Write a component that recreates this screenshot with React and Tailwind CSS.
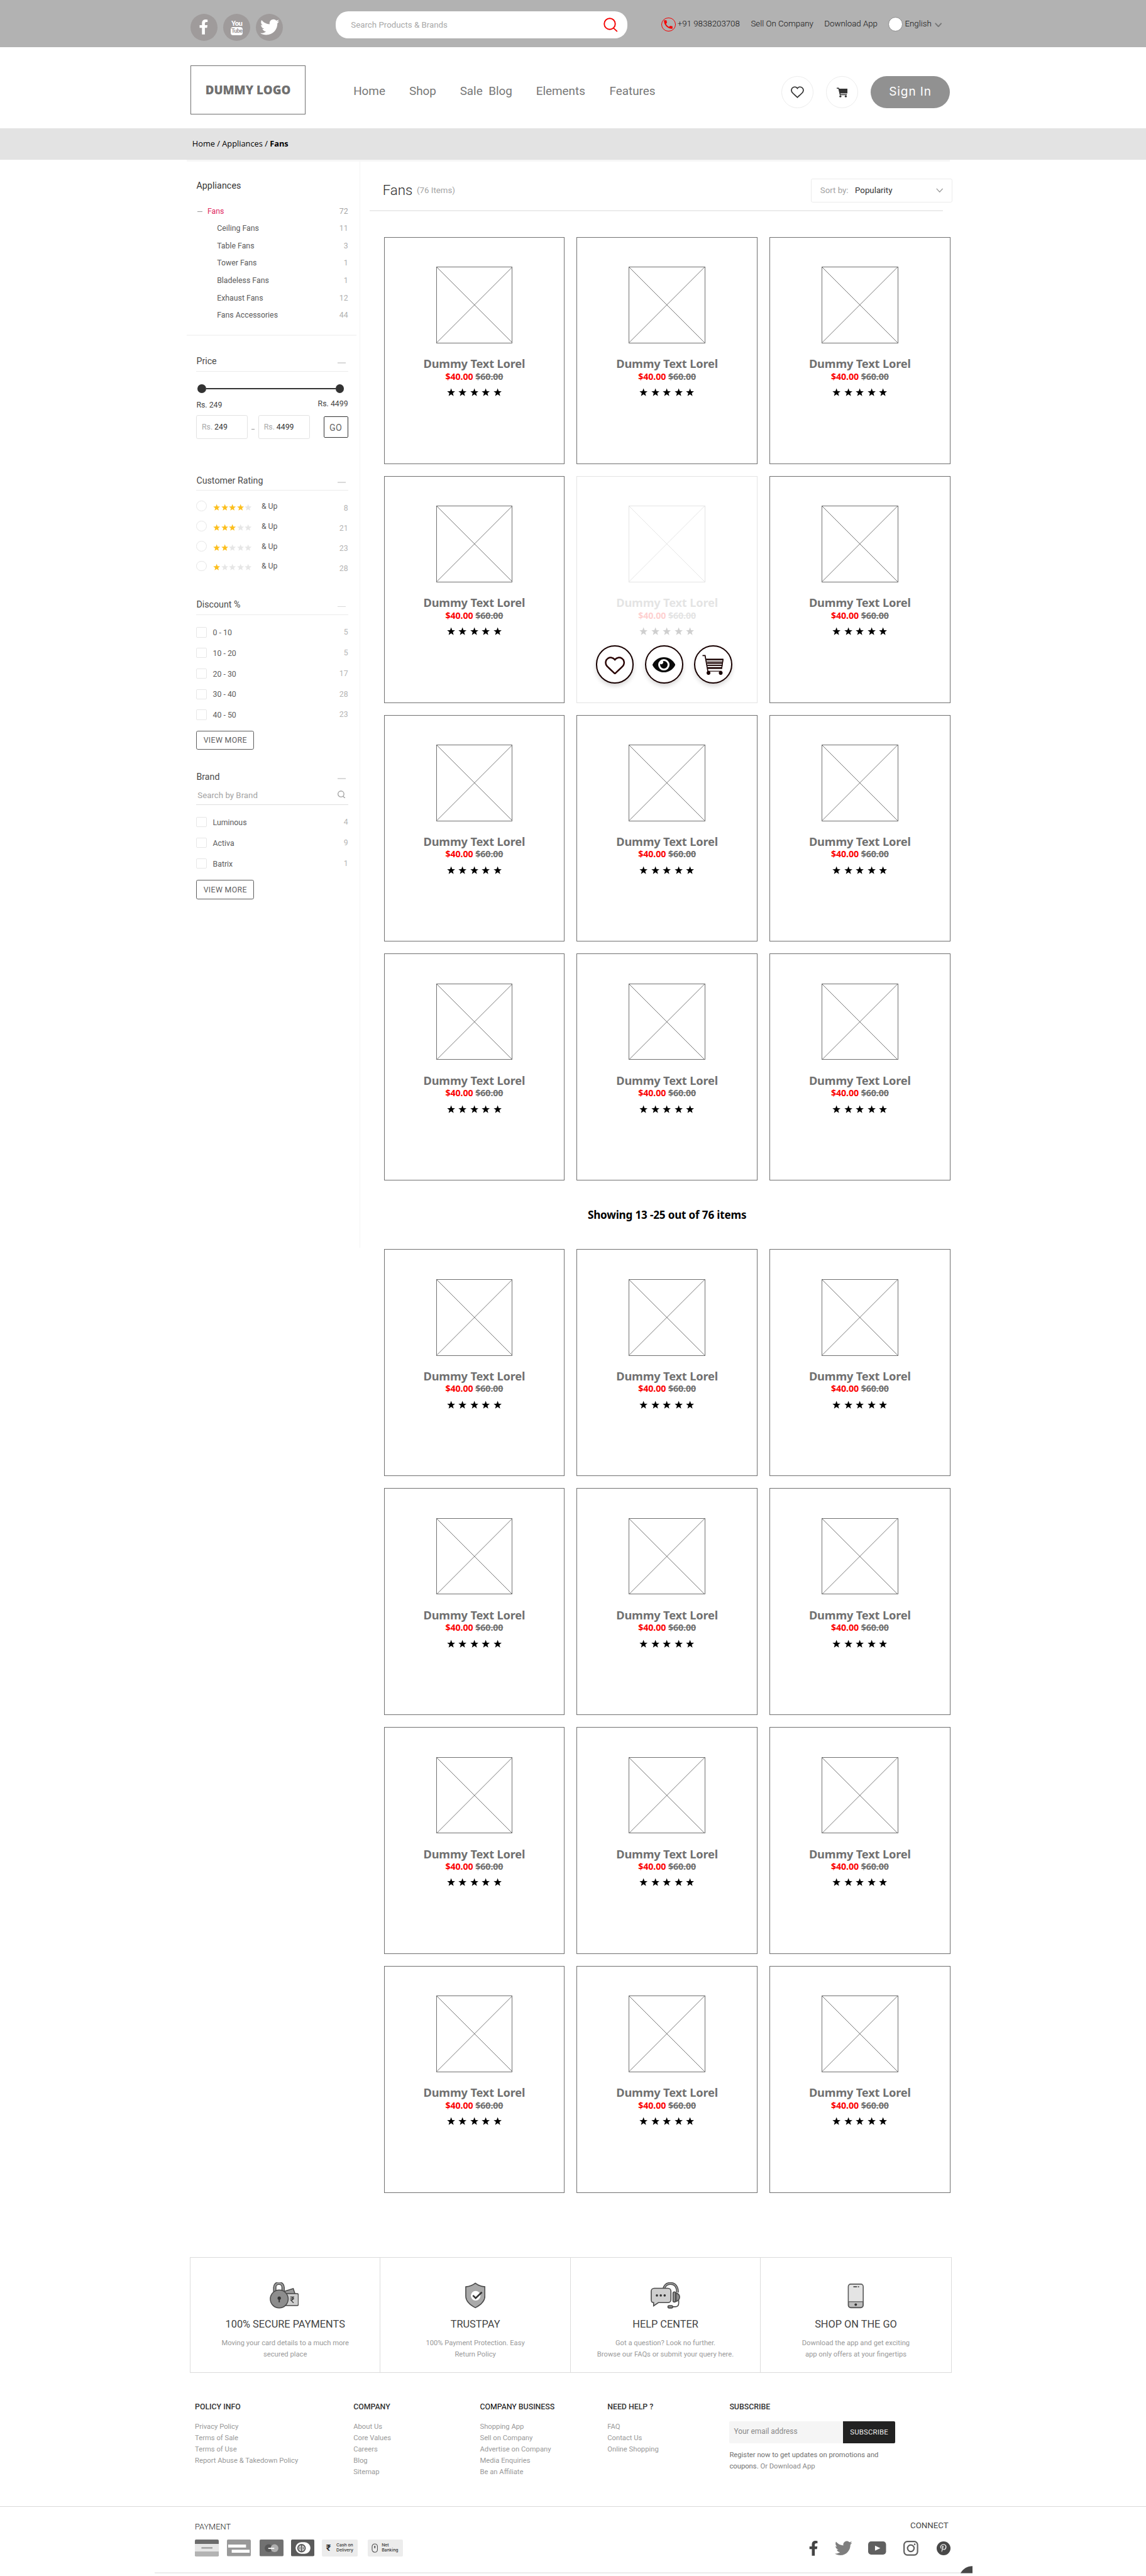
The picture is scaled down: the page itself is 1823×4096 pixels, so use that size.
import React from 'react';
import { FaFacebookF, FaTwitter, FaEye, FaPinterestP } from 'react-icons/fa';
import { MdCall } from 'react-icons/md';

const OPEN = "font-['Open_Sans','Liberation_Sans',sans-serif]";
const NOTO = "font-['Noto_Sans','Liberation_Sans',sans-serif]";
const INTER = "font-['Inter','Liberation_Sans',sans-serif]";

/* ---------- small drawings ---------- */

function Star({ className }) {
  return (
    <svg viewBox="0 0 24 24" className={className} fill="currentColor">
      <path d="M12 0.8l3 8.1 8.6.4-6.700 5.300 2.300 8.300L12 18.200l-7.200 4.700 2.300-8.300L.4 9.300 9 8.900z" />
    </svg>
  );
}

function Chevron({ className, width = 2 }) {
  return (
    <svg viewBox="0 0 12 8" className={className} fill="none" stroke="currentColor" strokeWidth={width}>
      <path d="M0.800 1l5.200 5.600L11.200 1" />
    </svg>
  );
}

function Magnifier({ className, width = 2 }) {
  return (
    <svg viewBox="0 0 24 24" className={className} fill="none" stroke="currentColor" strokeWidth={width}>
      <circle cx="10.500" cy="10.500" r="9.200" />
      <path d="M16.500 17.300l6.500 6" />
    </svg>
  );
}

function Heart({ className, width = 2 }) {
  return (
    <svg viewBox="0 0 34 30" className={className} fill="none" stroke="currentColor" strokeWidth={width}>
      <path d="M17 5.200C14 1.200 9 .8 5.400 3 1 6 .6 11.500 3.200 15.300 4.400 17 14 25.800 17 28.600c3-2.800 12.600-11.600 13.800-13.300C33.400 11.500 33 6 28.600 3 25 .8 20 1.200 17 5.200z" />
    </svg>
  );
}

function CartSolid({ className }) {
  return (
    <svg viewBox="0 0 18 17" className={className} fill="currentColor">
      <path d="M0 .6h3.600l.7 1.600H18v6.800c0 .6-.4 1-1 1H6.200l.3 1.400H17V13H5.200L2.700 2.200H0z" />
      <circle cx="6.200" cy="14.900" r="1.700" />
      <circle cx="15.200" cy="14.900" r="1.700" />
    </svg>
  );
}

function CartStriped({ className }) {
  return (
    <svg viewBox="0 0 36 34" className={className}>
      <g fill="none" stroke="#180000">
        <path d="M.5 1.500h4.300l4.800 27" strokeWidth="1.800" />
        <path d="M6.500 8h29" strokeWidth="2.600" />
        <path d="M7.500 11.500h27.500" strokeWidth="1" />
        <path d="M8 14h26.500" strokeWidth="2.400" />
        <path d="M8.500 17.800h25.500" strokeWidth="2" />
        <path d="M9 22.300h24" strokeWidth="3" />
        <path d="M35 7.500l-2.500 16" strokeWidth="1.600" />
        <path d="M9.500 27.600h23" strokeWidth="1.200" />
      </g>
      <circle cx="10.500" cy="30.600" r="3.200" fill="#180000" />
      <circle cx="31" cy="30.600" r="3.200" fill="#180000" />
    </svg>
  );
}

function LockIcon() {
  return (
    <svg viewBox="0 0 49 44" className="-ml-[4px] h-[44px] w-[49px]" stroke="#4a4a4a" strokeWidth="1.600">
      <path d="M25 15l14.500-4.500 3 9H26z" fill="#9b9b9b" />
      <rect x="24" y="19" width="24" height="20" rx="2" fill="#cfcfcf" />
      <path d="M8.500 16V8.500a7 7 0 0 1 14 0V16" fill="none" strokeWidth="5.500" />
      <path d="M8.500 16V8.500a7 7 0 0 1 14 0V16" fill="none" stroke="#9b9b9b" strokeWidth="2.500" />
      <ellipse cx="16" cy="28" rx="15" ry="15" fill="#8d8d8d" />
      <circle cx="16" cy="26.500" r="2.800" fill="#333" stroke="none" />
      <path d="M16 27v6.500" stroke="#333" strokeWidth="2" />
      <path d="M34.500 24.500h6.500M34.500 27.500h6.500M35.500 24.500c5 0 5 5.500 0 5.500l4.500 4.500" fill="none" stroke="#333" strokeWidth="1.300" />
    </svg>
  );
}

function ShieldIcon() {
  return (
    <svg viewBox="0 0 34 44" className="h-[44px] w-[34px]">
      <path d="M17 1.500c5 4 10 5.500 16 6v15.500c0 9-7 15-16 19.500C8 38 1 32 1 23V7.500c6-.5 11-2 16-6z" fill="#a9a9a9" stroke="#4a4a4a" strokeWidth="1.700" />
      <circle cx="17.500" cy="22.500" r="8" fill="#fff" />
      <path d="M13 22l4.500 4.500L28 16.500" fill="none" stroke="#333" strokeWidth="2.800" />
    </svg>
  );
}

function HeadsetIcon() {
  return (
    <svg viewBox="0 0 50 44" className="h-[44px] w-[50px]" stroke="#4a4a4a" strokeWidth="1.700">
      <path d="M22 11C24 4 28 2 33 2c8 0 12 6 12 15" fill="none" strokeWidth="4.500" />
      <path d="M22 11C24 4 28 2 33 2c8 0 12 6 12 15" fill="none" stroke="#b5b5b5" strokeWidth="1.500" />
      <path d="M6 10h23a5 5 0 0 1 5 5v14a5 5 0 0 1-5 5H13l-8 5.500V34c-3 0-4-2-4-5V15a5 5 0 0 1 5-5z" fill="#cfcfcf" />
      <g fill="#333" stroke="none">
        <circle cx="10.500" cy="22" r="1.900" />
        <circle cx="17" cy="22" r="1.900" />
        <circle cx="23.500" cy="22" r="1.900" />
      </g>
      <rect x="37.500" y="16" width="4.500" height="17" rx="2.200" fill="#8d8d8d" />
      <path d="M42.500 18c8 2 8 11 0 14z" fill="#8d8d8d" />
      <path d="M47 30v5c0 4-2 6-6 6h-4" fill="none" />
      <rect x="29" y="39" width="8" height="4" rx="2" fill="#8d8d8d" />
    </svg>
  );
}

function PhoneIcon() {
  return (
    <svg viewBox="0 0 28 44" className="h-[44px] w-[28px]">
      <rect x="1.500" y="3" width="25" height="39.500" rx="4" fill="#e4e4e4" stroke="#5a5a5a" strokeWidth="1.700" />
      <path d="M2 32.500h24v6a3.500 3.500 0 0 1-3.500 3.500h-17A3.500 3.500 0 0 1 2 38.500z" fill="#bdbdbd" stroke="#5a5a5a" strokeWidth="1.400" />
      <circle cx="14" cy="37.500" r="2.100" fill="#333" />
      <path d="M10 7.500h6M17.500 7.500h2" stroke="#4a4a4a" strokeWidth="1.700" />
    </svg>
  );
}

/* ---------- header ---------- */

function SocialCircle({ children }) {
  return <div className="flex size-[45px] items-center justify-center rounded-full bg-[#9f9b9b] text-white">{children}</div>;
}

function TopBar() {
  return (
    <div className="flex h-[79px] bg-[#b2b2b2] pl-[319px]">
      <div className="mt-[23px] flex gap-[10px]">
        <SocialCircle><FaFacebookF className="size-[25px]" /></SocialCircle>
        <SocialCircle>
          <div className="flex flex-col items-center pt-[1px]">
            <span className="text-[12px] leading-[12px] font-bold tracking-[-0.900px]">You</span>
            <span className="flex h-[13px] w-[21px] items-center justify-center rounded-[4px] bg-white text-[9.500px] font-bold tracking-[-0.800px] text-[#9f9b9b]">Tube</span>
          </div>
        </SocialCircle>
        <SocialCircle><FaTwitter className="size-[32px]" /></SocialCircle>
      </div>
      <div className="mt-[19px] ml-[88px] flex h-[45px] w-[489px] items-center justify-between rounded-[21px] bg-white pr-[16px] pl-[26px] text-[14px] text-[#a8a8a8]">
        <span className="pt-[1px]">Search Products &amp; Brands</span>
        <Magnifier className="size-[24px] text-[#f40000]" />
      </div>
      <div className="mt-[28px] ml-[57px] flex h-[24px] items-center text-[14px] font-light text-[#111]">
        <span className="mt-[2px] flex size-[24px] items-center justify-center rounded-full border-[1.500px] border-[#f40000] text-[#f40000]">
          <MdCall className="size-[19px]" />
        </span>
        <span className="ml-[3px] w-[123px]">+91 9838203708</span>
        <span className="w-[123px]">Sell On Company</span>
        <span className="w-[107px]">Download App</span>
        <span className="mt-[1px] size-[24px] rounded-full border border-[#888] bg-white" />
        <span className="ml-[4px]">English</span>
        <Chevron className="mt-[3px] ml-[6px] h-[8px] w-[12px] text-[#777]" />
      </div>
    </div>
  );
}

function NavBar() {
  return (
    <div className="flex h-[136px] pl-[319px]">
      <div className={`mt-[31px] flex h-[82px] w-[193px] items-center justify-center border border-[#707070] text-[19.700px] font-extrabold text-[#707070] ${OPEN}`}>
        DUMMY LOGO
      </div>
      <nav className="mt-[62px] ml-[80px] flex h-[24px] w-[717px] items-center text-[19.900px] text-[#777]">
        <span className="w-[93.500px]">Home</span>
        <span className="w-[85px]">Shop</span>
        <span className="w-[48px]">Sale</span>
        <span className="w-[79.500px]">Blog</span>
        <span className="w-[123px]">Elements</span>
        <span>Features</span>
      </nav>
      <div className="mt-[48px] flex h-[54px]">
        <span className="flex size-[54px] items-center justify-center rounded-full border border-[#ececec]">
          <Heart className="h-[20px] w-[22px] text-[#333]" width={2.8} />
        </span>
        <span className="ml-[21px] flex size-[54px] items-center justify-center rounded-full border border-[#ececec]">
          <CartSolid className="mt-[1px] h-[17px] w-[18px] text-[#333]" />
        </span>
        <button className={`ml-[21px] w-[132px] rounded-[27px] bg-[#919191] pt-[1px] text-[20px] tracking-[0.950px] text-white ${INTER}`}>Sign In</button>
      </div>
    </div>
  );
}

/* ---------- sidebar ---------- */

const categories = [
  ['Ceiling Fans', '11'],
  ['Table Fans', '3'],
  ['Tower Fans', '1'],
  ['Bladeless Fans', '1'],
  ['Exhaust Fans', '12'],
  ['Fans Accessories', '44'],
];
const ratings = [[4, '8'], [3, '21'], [2, '23'], [1, '28']];
const discounts = [['0 - 10', '5'], ['10 - 20', '5'], ['20 - 30', '17'], ['30 - 40', '28'], ['40 - 50', '23']];
const brands = [['Luminous', '4'], ['Activa', '9'], ['Batrix', '1']];

function SectionHead({ title, line = true, className = '' }) {
  return (
    <div className={`flex justify-between border-b text-[15px] leading-[31px] text-[#4a4a4a] ${line ? 'h-[32px] border-[#ebebeb]' : 'h-[30px] border-transparent'} ${className}`}>
      <span>{title}</span>
      <span className="mt-[17px] mr-[4px] h-[2px] w-[13px] bg-[#d9d9d9]" />
    </div>
  );
}

function CheckList({ rows }) {
  return (
    <div className="mt-[12px]">
      {rows.map(([label, count]) => (
        <div key={label} className="flex h-[34.500px] items-center">
          <span className="size-[17px] rounded-[2px] border border-[#e6e6e6]" />
          <span className="ml-[10.500px] flex-1 pt-[2px] text-[13px] text-[#5c5c5c]">{label}</span>
          <span className="text-[13px] text-[#b5b5b5]">{count}</span>
        </div>
      ))}
    </div>
  );
}

function ViewMore({ className }) {
  return (
    <button className={`block h-[32px] w-[96.500px] rounded-[3px] border border-[#5c5c5c] pt-[1px] text-[13px] tracking-[0.350px] text-[#606060] ${className}`}>
      VIEW MORE
    </button>
  );
}

function PriceInput({ value }) {
  return (
    <span className="flex h-[40px] w-[86px] items-center rounded-[3px] border border-[#e2e2e2] pl-[8px] text-[13px]">
      <span className="text-[#aaa]">Rs.</span>
      <span className="ml-[3px] text-[#333]">{value}</span>
    </span>
  );
}

function Sidebar() {
  return (
    <aside className="ml-[313px] h-[1818px] w-[290px] shrink-0 border-r-2 border-[#f4f4f4] pl-[16px]">
      <div className="w-[254px]">
        <div className="pt-[30px] text-[15px] leading-[20px] tracking-[0.100px] text-[#333]">Appliances</div>
        <div className="mt-[18px] text-[13px] text-[#5c5c5c]">
          <div className="flex h-[29px] items-center">
            <span className="mt-[2px] ml-[2px] h-[1.500px] w-[8px] bg-[#999]" />
            <span className="ml-[8.500px] flex-1 pt-[1px] text-[#e0295f]">Fans</span>
            <span className="pt-[1px] text-[#a5a5a5]">72</span>
          </div>
          {categories.map(([label, count]) => (
            <div key={label} className="flex h-[29px] items-center justify-between pt-[1px] pl-[34.500px]">
              <span>{label}</span>
              <span className="text-[#b0b0b0]">{count}</span>
            </div>
          ))}
        </div>
        <div className="mt-[18px] -mr-[14px] -ml-[16px] h-[2px] bg-[#f5f5f5]" />

        <SectionHead title="Price" className="mt-[28px]" />
        <div className="mt-[22px] mr-[7px] ml-[2px] flex items-center text-[#333]">
          <span className="size-[14px] rounded-full bg-[#333]" />
          <span className="h-[1.500px] flex-1 bg-[#333]" />
          <span className="size-[14px] rounded-full bg-[#333]" />
        </div>
        <div className="mt-[9px] flex h-[20px] justify-between text-[13px] leading-[20px] text-[#444]">
          <span className="pt-[2px]">Rs. 249</span>
          <span>Rs. 4499</span>
        </div>
        <div className="mt-[8px] flex items-center">
          <PriceInput value="249" />
          <span className="mx-[6px] mt-[8px] h-[1.500px] w-[6px] bg-[#999]" />
          <PriceInput value="4499" />
          <button className="ml-auto h-[36px] w-[41px] rounded-[2px] border border-[#333] pt-[3px] text-[15px] tracking-[0.300px] text-[#666]">GO</button>
        </div>

        <SectionHead title="Customer Rating" className="mt-[55px]" />
        <div className="mt-[9px]">
          {ratings.map(([filled, count]) => (
            <div key={filled} className="flex h-[33.500px] items-center text-[13px]">
              <span className="size-[17.500px] rounded-full border border-[#e6e6e6]" />
              <span className="mt-[4px] ml-[10.500px] flex w-[81px] gap-[1.300px]">
                {[1, 2, 3, 4, 5].map((i) => (
                  <Star key={i} className={`size-[12px] ${i <= filled ? 'text-[#fcbf1e]' : 'text-[#e6e6e6]'}`} />
                ))}
              </span>
              <span className="flex-1 pt-[1px] text-[#5c5c5c]">&amp; Up</span>
              <span className="pt-[8px] text-[#b5b5b5]">{count}</span>
            </div>
          ))}
        </div>

        <SectionHead title="Discount %" className="mt-[33px]" />
        <CheckList rows={discounts} />
        <ViewMore className="mt-[9.500px]" />

        <SectionHead title="Brand" line={false} className="mt-[30px]" />
        <div className="flex h-[32px] items-center justify-between border-b border-[#dedede] pr-[4px] pl-[2px] text-[14px] text-[#a3a3a3]">
          <span className="pt-[3px]">Search by Brand</span>
          <Magnifier className="size-[13px] -translate-y-px" width={2.6} />
        </div>
        <CheckList rows={brands} />
        <ViewMore className="mt-[10.500px]" />
      </div>
    </aside>
  );
}

/* ---------- products ---------- */

function ActionCircle({ children }) {
  return (
    <span className="flex size-[64px] items-center justify-center rounded-full border-[2.200px] border-[#180000] bg-white shadow-[0_4px_8px_rgba(0,0,0,0.16)]">
      {children}
    </span>
  );
}

function ProductCard({ hovered = false }) {
  return (
    <div className={`h-[380px] border pt-[49px] ${hovered ? 'border-[#e3e3e3]' : 'border-[#707070]'}`}>
      <div className={`flex flex-col items-center ${hovered ? 'opacity-[0.185]' : ''}`}>
        <div className="size-[128px] border border-[#707070]">
          <svg viewBox="0 0 126 126" className="block size-full" fill="none" stroke="#707070">
            <path d="M0 0l126 126M126 0L0 126" strokeWidth="1" />
          </svg>
        </div>
        <div className={`mt-[22.500px] h-[24px] text-[19.200px] leading-[24px] font-bold tracking-[-0.170px] text-[#707070] ${NOTO}`}>
          Dummy Text Lorel
        </div>
        <div className={`-mt-[1.500px] flex gap-[4px] text-[15px] leading-[20px] font-bold tracking-[-0.120px] ${NOTO}`}>
          <span className="text-[#fb0303]">$40.00</span>
          <span className="text-[#707070] line-through">$60.00</span>
        </div>
        <div className="mt-[10px] flex gap-[5.500px] text-black">
          {[1, 2, 3, 4, 5].map((i) => <Star key={i} className="size-[14px]" />)}
        </div>
      </div>
      {hovered && (
        <div className="mt-[17px] ml-[31px] flex gap-[18.500px]">
          <ActionCircle><Heart className="mt-[2px] h-[30px] w-[34px] text-[#280000]" width={2.6} /></ActionCircle>
          <ActionCircle><FaEye className="size-[38px] text-[#0a0a0a]" /></ActionCircle>
          <ActionCircle><CartStriped className="h-[34px] w-[36px] -translate-x-px" /></ActionCircle>
        </div>
      )}
    </div>
  );
}

function ProductGrid({ hoveredIndex = -1 }) {
  return (
    <div className="grid w-[949px] grid-cols-3 gap-[20px]">
      {Array.from({ length: 12 }, (_, i) => <ProductCard key={i} hovered={i === hoveredIndex} />)}
    </div>
  );
}

function Main() {
  return (
    <main className="ml-[40px] w-[952px]">
      <div className="mt-[28px] flex h-[40px] items-center">
        <span className="-ml-[2px] text-[23.500px] font-light text-[#2c2c2c]">Fans</span>
        <span className="mt-[1px] ml-[7px] flex-1 text-[14px] text-[#a3a3a3]">(76 Items)</span>
        <div className="flex h-full w-[236px] items-center rounded-[3px] border border-[#ebebeb] pr-[14px] pl-[14px] text-[14px]">
          <span className="text-[#a3a3a3]">Sort by:</span>
          <span className="ml-[11px] flex-1 text-[#333]">Popularity</span>
          <Chevron className="h-[8px] w-[12px] text-[#999]" width={1.3} />
        </div>
      </div>
      <div className="mt-[13px] -ml-[24px] h-[1.500px] w-[961px] bg-[#ebebeb]" />
      <div className="mt-[43.500px]"><ProductGrid hoveredIndex={4} /></div>
      <div className={`flex h-[115px] w-[949px] items-center justify-center text-[18px] font-bold tracking-[-0.180px] text-black ${NOTO}`}>
        Showing 13 -25 out of 76 items
      </div>
      <ProductGrid />
    </main>
  );
}

/* ---------- footer ---------- */

const features = [
  [LockIcon, '100% SECURE PAYMENTS', 'Moving your card details to a much more', 'secured place'],
  [ShieldIcon, 'TRUSTPAY', '100% Payment Protection. Easy', 'Return Policy'],
  [HeadsetIcon, 'HELP CENTER', 'Got a question? Look no further.', 'Browse our FAQs or submit your query here.'],
  [PhoneIcon, 'SHOP ON THE GO', 'Download the app and get exciting', 'app only offers at your fingertips'],
];

function Features() {
  return (
    <section className="mt-[108px] ml-[318px] grid h-[193px] w-[1276px] grid-cols-4 border border-[#dcdcdc]">
      {features.map(([Icon, title, a, b], i) => (
        <div key={title} className={`flex flex-col items-center pt-[41px] ${i < 3 ? 'border-r border-[#dcdcdc]' : ''}`}>
          <Icon />
          <h3 className="mt-[15.500px] text-[17.200px] leading-[22px] text-[#444]">{title}</h3>
          <p className="mt-[10.500px] text-center text-[11.800px] leading-[19px] text-[#999]">{a}<br />{b}</p>
        </div>
      ))}
    </section>
  );
}

function LinkColumn({ title, links, className }) {
  return (
    <div className={className}>
      <h4 className="text-[13px] leading-[20px] font-medium text-[#333]">{title}</h4>
      <ul className="mt-[13px] text-[11.850px] leading-[19.100px] text-[#999]">
        {links.map((l) => <li key={l}>{l}</li>)}
      </ul>
    </div>
  );
}

function FooterLinks() {
  return (
    <section className="flex h-[224px] pt-[48px] pl-[326.500px]">
      <LinkColumn className="w-[265.500px]" title="POLICY INFO" links={['Privacy Policy', 'Terms of Sale', 'Terms of Use', 'Report Abuse & Takedown Policy']} />
      <LinkColumn className="w-[212px]" title="COMPANY" links={['About Us', 'Core Values', 'Careers', 'Blog', 'Sitemap']} />
      <LinkColumn className="w-[213.500px]" title={<><span className="font-normal text-black">COMPANY</span> BUSINESS</>} links={['Shopping App', 'Sell on Company', 'Advertise on Company', 'Media Enquiries', 'Be an Affiliate']} />
      <LinkColumn className="w-[204.500px]" title="NEED HELP ?" links={['FAQ', 'Contact Us', 'Online Shopping']} />
      <div>
        <h4 className="text-[13px] leading-[20px] font-medium text-[#333]">SUBSCRIBE</h4>
        <div className="mt-[13px] flex h-[37px] w-[278px] text-[12px]">
          <span className="flex w-[190px] items-center rounded-l-[2px] bg-[#f5f5f5] pl-[7.500px] text-[12.500px] text-[#888]">Your email address</span>
          <button className="flex-1 rounded-r-[2px] bg-[#222] text-[12px] tracking-[0.200px] text-[#eee]">SUBSCRIBE</button>
        </div>
        <p className="mt-[11px] text-[11.850px] leading-[19px] text-[#707070]">
          Register now to get updates on promotions and<br />
          coupons. <span className="text-[#8a8a8a]">Or Download App</span>
        </p>
      </div>
    </section>
  );
}

function Payments() {
  return (
    <div className="mt-[10px] flex h-[28px]">
      <svg viewBox="0 0 40 28" className="h-[28px] w-[40px]">
        <rect width="40" height="28" rx="2" fill="#6c6c6c" />
        <path d="M0 7.500h40V22H0z" fill="#e6e6e6" />
        <path d="M0 20h40v6a2 2 0 0 1-2 2H2a2 2 0 0 1-2-2z" fill="#b3b3b3" />
        <path d="M11 14h18.500" stroke="#a6a6a6" strokeWidth="2.800" />
      </svg>
      <svg viewBox="0 0 40 28" className="ml-[14px] h-[28px] w-[40px]">
        <rect width="40" height="28" rx="2" fill="#999" />
        <path d="M2 8.500h30v5H2zM8 17h30v5H8z" fill="#fff" />
      </svg>
      <svg viewBox="0 0 40 28" className="ml-[14px] h-[28px] w-[40px]">
        <rect width="40" height="28" rx="2" fill="#717171" />
        <circle cx="15" cy="14.500" r="6.500" fill="#575757" />
        <circle cx="25" cy="14.500" r="6.500" fill="#b0b0b0" />
        <path d="M14.500 14.800h10" stroke="#fff" strokeWidth="1.800" />
      </svg>
      <svg viewBox="0 0 39 28" className="ml-[13px] h-[28px] w-[39px]">
        <rect width="39" height="28" rx="2" fill="#5a5a5a" />
        <rect x="7.500" y="4.500" width="25" height="19.500" rx="9.750" fill="#fff" />
        <circle cx="17.500" cy="14.500" r="7.200" fill="#5a5a5a" />
        <path d="M16 10.500a4.300 4.300 0 0 0 0 8zM19.200 10.500a4.300 4.300 0 0 1 0 8z" fill="#5a5a5a" stroke="#eee" strokeWidth="1.200" />
      </svg>
      <span className="ml-[13px] flex w-[60px] items-center rounded-[2px] bg-[#ececec] pl-[7px]">
        <span className="w-[17px] text-[15px] leading-none font-bold text-[#333]">₹</span>
        <span className={`text-[7.200px] leading-[8.500px] font-medium text-[#333] ${INTER}`}>Cash on<br />Delivery</span>
      </span>
      <span className="ml-[17px] flex w-[59px] items-center rounded-[2px] bg-[#ececec] pl-[6px]">
        <svg viewBox="0 0 11 16" className="h-[16px] w-[11px]" fill="none" stroke="#555" strokeWidth="1.200">
          <rect x="1" y="1" width="9" height="14" rx="4.500" />
          <path d="M5.500 4.200v4" strokeWidth="2" />
        </svg>
        <span className={`ml-[6px] text-[7.200px] leading-[8.500px] font-medium text-[#333] ${INTER}`}>Net<br />Banking</span>
      </span>
    </div>
  );
}

function Connect() {
  return (
    <div className="flex w-[240px] flex-col">
      <span className="mr-[6px] self-end text-[14px] leading-[20px] text-[#444]">CONNECT</span>
      <div className="mt-[14px] flex h-[26px] items-center">
        <FaFacebookF className="-ml-[1px] h-[25px] w-[17px] text-[#444]" />
        <FaTwitter className="ml-[28px] size-[29px] text-[#7e7e7e]" />
        <svg viewBox="0 0 30 22" className="ml-[27px] h-[22px] w-[30px]">
          <rect width="30" height="22" rx="5" fill="#606060" />
          <path d="M11.500 7l9 4.300-9 4.300z" fill="#fff" />
        </svg>
        <svg viewBox="0 0 25 25" className="ml-[29px] size-[25px]" fill="none" stroke="#606060" strokeWidth="2.300">
          <rect x="1.200" y="1.200" width="22.600" height="22.600" rx="5.500" />
          <circle cx="12.500" cy="12.500" r="5.500" />
          <circle cx="19" cy="6" r="1.400" fill="#606060" stroke="none" />
        </svg>
        <span className="ml-[30px] flex size-[23px] items-center justify-center rounded-full bg-[#484848]">
          <FaPinterestP className="size-[14px] text-[#ddd]" />
        </span>
      </div>
    </div>
  );
}

function BottomBar() {
  return (
    <section className="border-t border-[#dadada]">
      <div className="flex h-[109px] justify-between pr-[325px] pl-[326.500px]">
        <div className="pt-[22.500px]">
          <div className="text-[13.500px] leading-[22px] font-light text-[#222]">PAYMENT</div>
          <Payments />
        </div>
        <div className="pt-[22px]"><Connect /></div>
      </div>
      <div className="relative ml-[259px] h-[2px] w-[1370px] bg-[#ececec]">
        <svg viewBox="0 0 20 12" className="absolute right-0 bottom-0 h-[12px] w-[20px]" fill="#484848">
          <path d="M0 12C4 5 11 .3 20 .3V12z" />
        </svg>
      </div>
    </section>
  );
}

export default function App() {
  return (
    <div className="h-[4313px] w-full overflow-hidden bg-white font-['Roboto','Liberation_Sans',sans-serif] whitespace-nowrap [zoom:0.9496]">
      <TopBar />
      <NavBar />
      <div className={`flex h-[53px] items-center bg-[#e3e3e3] pb-[2px] pl-[322px] text-[13.500px] text-black ${OPEN}`}>
        <span>Home / Appliances /&nbsp;</span>
        <b>Fans</b>
      </div>
      <div className="ml-[313px] h-[3px] w-[1278px] bg-[#f7f7f7]" />
      <div className="flex">
        <Sidebar />
        <Main />
      </div>
      <Features />
      <FooterLinks />
      <BottomBar />
    </div>
  );
}
